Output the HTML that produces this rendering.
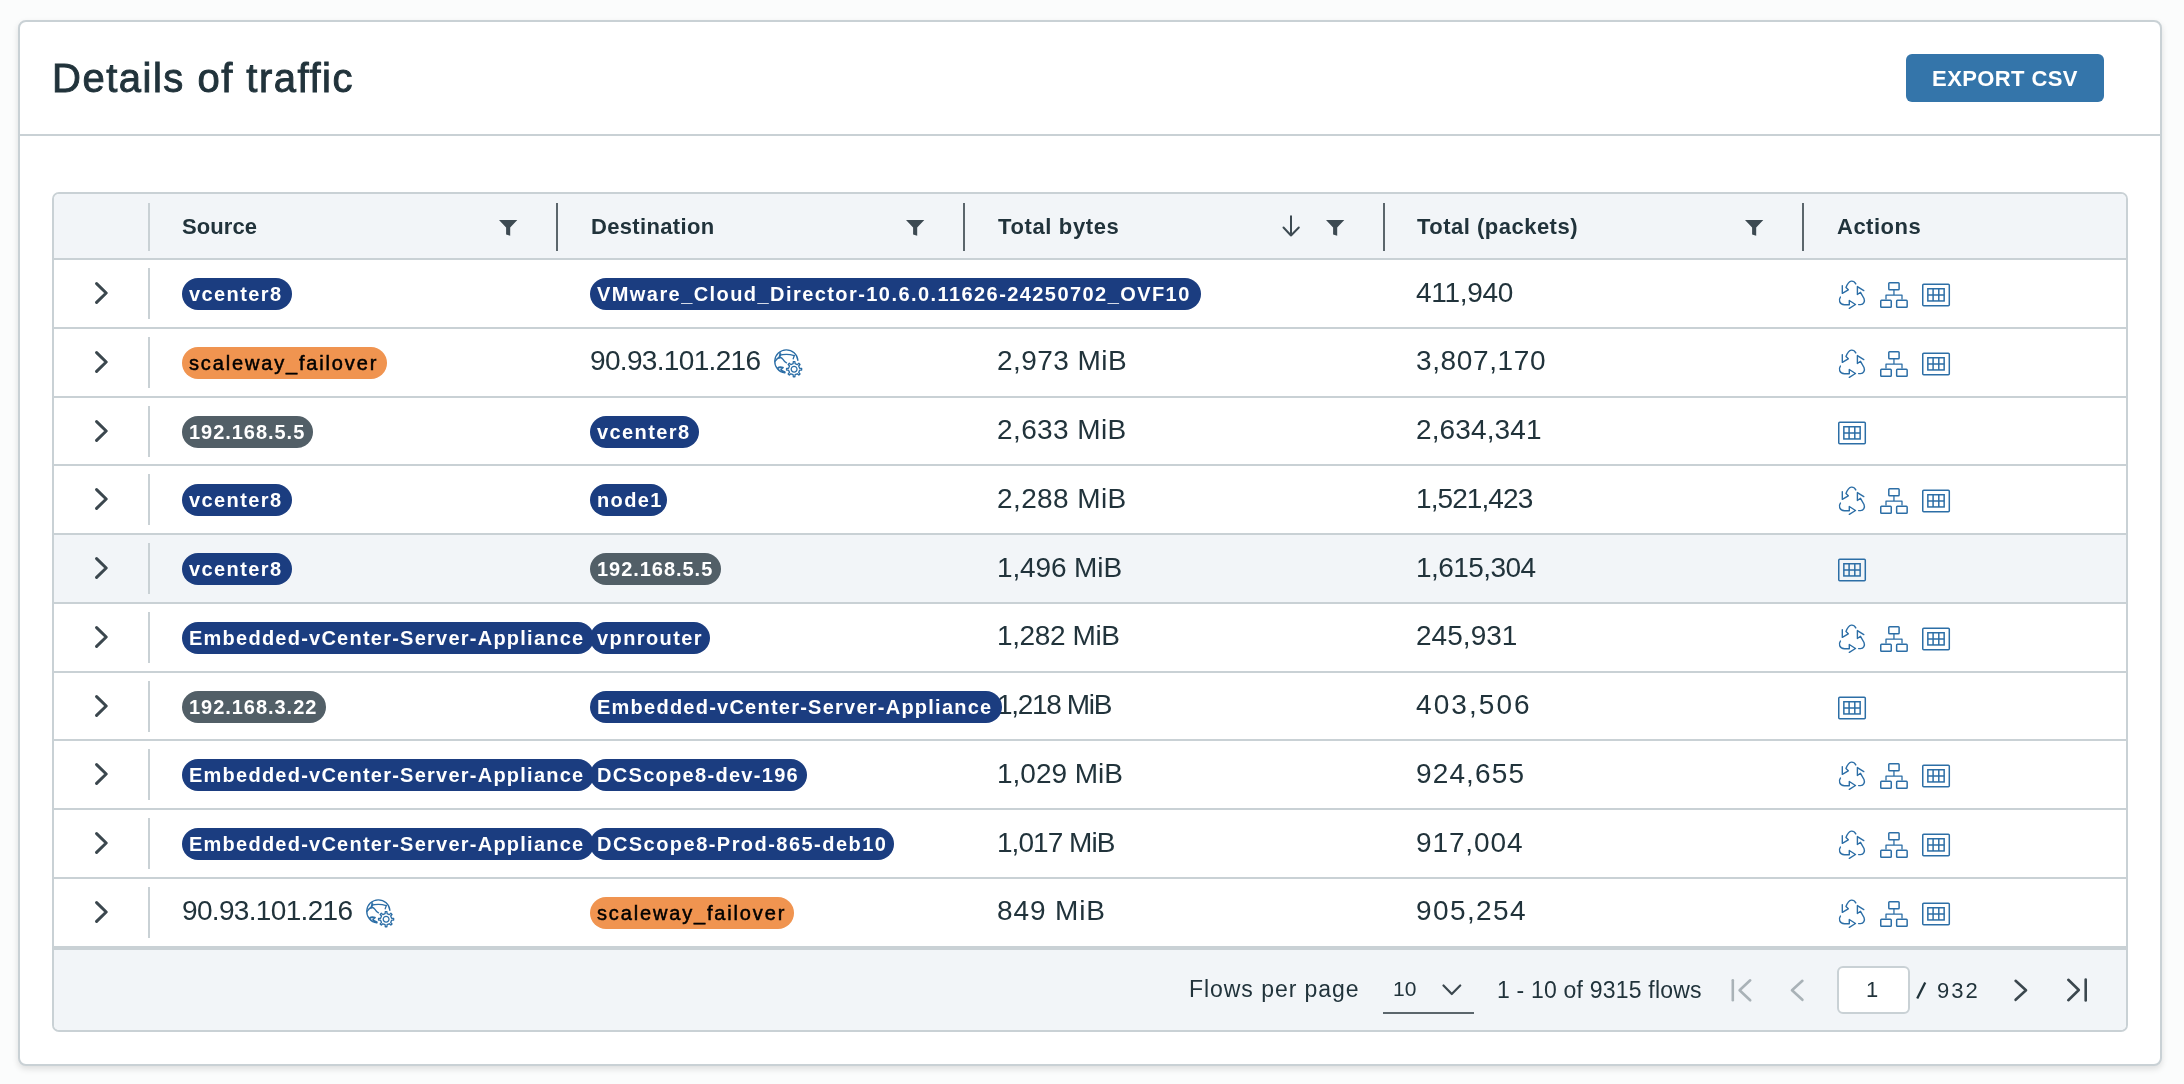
<!DOCTYPE html>
<html><head><meta charset="utf-8"><title>Details of traffic</title>
<style>
html,body{margin:0;padding:0}
body{width:2184px;height:1084px;background:#fbfcfc;position:relative;overflow:hidden;font-family:"Liberation Sans",sans-serif;color:#21333b}
.abs{position:absolute}
.card{position:absolute;left:18px;top:20px;width:2140px;height:1042px;border:2px solid #c9d1d5;border-radius:8px;background:#fff;box-shadow:0 3px 6px rgba(0,0,0,0.12)}
.hline{position:absolute;left:20px;top:134px;width:2140px;height:2px;background:#c9d1d5}
.title{-webkit-text-stroke:0.9px #21333b;will-change:transform;position:absolute;left:52px;top:58px;font-size:40px;line-height:40px;letter-spacing:1.5px;white-space:nowrap;color:#21333b}
.btn{will-change:transform;position:absolute;left:1906px;top:54px;width:198px;height:48px;border-radius:6px;background:#3475aa;color:#fff;font-weight:700;font-size:22px;line-height:50px;text-align:center;letter-spacing:0.4px}
.grid{will-change:transform;position:absolute;left:52px;top:192px;width:2072px;height:836px;border:2px solid #c9d1d5;border-radius:7px;background:#fff;overflow:hidden}
.hdr{position:absolute;left:0;top:0;width:2072px;height:64px;background:#f2f5f8;border-bottom:2px solid #c9d1d5}
.hl{position:absolute;top:21.5px;font-size:22px;line-height:22px;font-weight:700;white-space:nowrap;color:#21333b}
.sep{position:absolute;top:9px;width:2px;height:48px;background:#5b666c}
.row{position:absolute;left:0;width:2072px;height:66.75px;border-bottom:2px solid #c9d1d5;background:#fff}
.row.hov{background:#f2f5f8}
.rsep{position:absolute;left:94px;top:8px;width:2px;height:51px;background:#c9d1d5}
.chev{position:absolute;left:41px;top:22px}
.bd{position:absolute;top:18px;height:32px;border-radius:16px;font-size:20px;line-height:32px;padding-left:7px;box-sizing:border-box;white-space:nowrap;overflow:visible;z-index:1}
.dt{position:absolute;top:18.6px;font-size:28px;line-height:28px;white-space:nowrap;letter-spacing:0.2px;color:#21333b}
.ic{position:absolute;top:16px}
.gl{position:absolute;top:16px}
.flt{position:absolute;top:26px}
.ftr{position:absolute;left:0;top:753.5px;width:2072px;height:82.5px;background:#f2f5f8;border-top:2px solid #c9d1d5}
.ft{position:absolute;font-size:23px;line-height:23px;white-space:nowrap;color:#21333b}
</style></head><body>
<div class="card"></div>
<div class="hline"></div>
<div class="title">Details of traffic</div>
<div class="btn">EXPORT CSV</div>
<div class="grid">
<div class="hdr">
<div class="sep" style="left:94px;background:#c9d1d5"></div>
<div class="hl" style="left:128px;letter-spacing:0.1px">Source</div>

<svg class="flt" style="left:445px" width="19" height="16" viewBox="0 0 19 16"><polygon points="0,0 18.3,0 11.2,7.6 11.2,15.7 7.1,14.5 7.1,7.6" fill="#3d4a52"/></svg>
<div class="sep" style="left:502px"></div>
<div class="hl" style="left:537px;letter-spacing:0.33px">Destination</div>
<svg class="flt" style="left:852px" width="19" height="16" viewBox="0 0 19 16"><polygon points="0,0 18.3,0 11.2,7.6 11.2,15.7 7.1,14.5 7.1,7.6" fill="#3d4a52"/></svg>
<div class="sep" style="left:909px"></div>
<div class="hl" style="left:944px;letter-spacing:0.63px">Total bytes</div>
<svg class="abs" style="left:1228px;top:21px" width="19" height="22" viewBox="0 0 19 22"><g fill="none" stroke="#3d4a52" stroke-width="2" stroke-linecap="round" stroke-linejoin="round"><path d="M9,1.2 V20.5 M1.5,12.5 L9,20.5 L16.8,12.5"/></g></svg>
<svg class="flt" style="left:1272px" width="19" height="16" viewBox="0 0 19 16"><polygon points="0,0 18.3,0 11.2,7.6 11.2,15.7 7.1,14.5 7.1,7.6" fill="#3d4a52"/></svg>
<div class="sep" style="left:1329px"></div>
<div class="hl" style="left:1363px;letter-spacing:0.49px">Total (packets)</div>
<svg class="flt" style="left:1691px" width="19" height="16" viewBox="0 0 19 16"><polygon points="0,0 18.3,0 11.2,7.6 11.2,15.7 7.1,14.5 7.1,7.6" fill="#3d4a52"/></svg>
<div class="sep" style="left:1748px"></div>
<div class="hl" style="left:1783px;letter-spacing:0.5px">Actions</div>
</div>
<div class="row" style="top:66.00px">
<div class="rsep"></div>
<svg class="chev" width="13" height="22" viewBox="0 0 13 22"><polyline points="1.6,1.6 11.2,11 1.6,20.4" fill="none" stroke="#3b474e" stroke-width="3" stroke-linecap="round" stroke-linejoin="round"/></svg>
<div class="bd" style="left:128px;width:110px;background:#1b3d80;color:#fff;font-weight:700;letter-spacing:1.4px">vcenter8</div>
<div class="bd" style="left:536px;width:611px;background:#1b3d80;color:#fff;font-weight:700;letter-spacing:1.43px">VMware_Cloud_Director-10.6.0.11626-24250702_OVF10</div>
<div class="dt" style="left:1362px;letter-spacing:-0.3px">411,940</div>
<svg class="ic" style="left:1780px" width="36" height="36" viewBox="0 0 36 36"><g fill="none" stroke="#2c6ea6" stroke-width="1.4" stroke-linecap="round" stroke-linejoin="round">
<path d="M21.8,7.9 C20.6,5.6 18.6,5 17.4,5.1 C15.2,5.3 13.6,7 12,11.6 L14.3,13.8 L8.3,17.3 L8.3,9.6"/>
<path d="M29.8,14.6 L23.4,10.6 L23.4,18.5 L26.5,16.3 L30,22.5 C31.2,25.5 29.6,28.6 26.5,28.6 L24.6,28.6"/>
<path d="M6.4,21.1 C4.6,23.5 5,28.8 10.5,28.8 L15.3,28.8 L15.3,24.5 L21.5,28.5 L15.3,32.3"/>
</g></svg>
<svg class="ic" style="left:1822px" width="36" height="36" viewBox="0 0 36 36"><g fill="none" stroke="#2c6ea6" stroke-width="1.5" stroke-linejoin="round">
<rect x="12.8" y="6.8" width="10.3" height="6.9" rx="0.8"/>
<rect x="4.75" y="24.35" width="10.5" height="7" rx="0.8"/>
<rect x="20.65" y="24.35" width="10.5" height="7" rx="0.8"/>
<path d="M17.95,13.7 V19.1 M10,23.6 V19.1 H26 V23.6" stroke-width="1.3"/>
</g></svg>
<svg class="ic" style="left:1864px" width="36" height="36" viewBox="0 0 36 36"><g fill="none" stroke="#2c6ea6" stroke-width="1.5">
<rect x="4.75" y="8.25" width="26.55" height="21.6" rx="1"/>
<rect x="9.85" y="12.75" width="16.3" height="12.2"/>
<path d="M15.1,12.75 V24.95 M20.8,12.75 V24.95 M9.85,18.9 H26.15"/>
</g></svg>
</div>
<div class="row" style="top:134.75px">
<div class="rsep"></div>
<svg class="chev" width="13" height="22" viewBox="0 0 13 22"><polyline points="1.6,1.6 11.2,11 1.6,20.4" fill="none" stroke="#3b474e" stroke-width="3" stroke-linecap="round" stroke-linejoin="round"/></svg>
<div class="bd" style="left:128px;width:205px;background:#f09450;color:#000;font-weight:400;letter-spacing:1.84px;-webkit-text-stroke:0.5px #000">scaleway_failover</div>
<div class="dt" style="left:536px;letter-spacing:-0.67px">90.93.101.216</div><svg class="gl" style="left:716px" width="36" height="36" viewBox="0 0 36 36"><g fill="none" stroke="#2c6ea6" stroke-width="1.3" stroke-linecap="round" stroke-linejoin="round">
<path d="M27.9,15.4 A11.6,11.6 0 1 0 14.8,27.9"/>
<path d="M10,7.5 C9.5,9.5 10.5,10.5 12.5,9.6 C16,9 20,9.2 24.3,10.6"/>
<path d="M5,16.5 C6.5,14 8.5,12.5 10,12.5 C11.5,12.5 12.3,13.3 13,14.3 C14,16 15.2,17.2 16.5,17.8"/>
<path d="M10.5,9.2 C10,10.5 9.5,11.5 9.3,12.5" stroke-width="2"/>
<path d="M24.3,10.6 L23.2,13.8"/>
<path d="M8,23 C9,22 10.5,21.8 13,22.5 C11.5,23.5 10.5,24.5 11.5,25.5 C12.5,26.2 13.5,26.7 14.8,27.2" stroke-width="1.8"/>
</g>
<g transform="translate(24.1,24.2)" fill="none" stroke="#2c6ea6" stroke-width="1.3" stroke-linejoin="round">
<path d="M5.52,-0.96 L7.55,-0.83 L7.55,0.83 L5.52,0.96 L4.58,3.22 L5.93,4.75 L4.75,5.93 L3.22,4.58 L0.96,5.52 L0.83,7.55 L-0.83,7.55 L-0.96,5.52 L-3.22,4.58 L-4.75,5.93 L-5.93,4.75 L-4.58,3.22 L-5.52,0.96 L-7.55,0.83 L-7.55,-0.83 L-5.52,-0.96 L-4.58,-3.22 L-5.93,-4.75 L-4.75,-5.93 L-3.22,-4.58 L-0.96,-5.52 L-0.83,-7.55 L0.83,-7.55 L0.96,-5.52 L3.22,-4.58 L4.75,-5.93 L5.93,-4.75 L4.58,-3.22Z"/>
<circle r="2.9"/>
</g></svg>
<div class="dt" style="left:943px;letter-spacing:0.45px">2,973 MiB</div>
<div class="dt" style="left:1362px;letter-spacing:0.613px">3,807,170</div>
<svg class="ic" style="left:1780px" width="36" height="36" viewBox="0 0 36 36"><g fill="none" stroke="#2c6ea6" stroke-width="1.4" stroke-linecap="round" stroke-linejoin="round">
<path d="M21.8,7.9 C20.6,5.6 18.6,5 17.4,5.1 C15.2,5.3 13.6,7 12,11.6 L14.3,13.8 L8.3,17.3 L8.3,9.6"/>
<path d="M29.8,14.6 L23.4,10.6 L23.4,18.5 L26.5,16.3 L30,22.5 C31.2,25.5 29.6,28.6 26.5,28.6 L24.6,28.6"/>
<path d="M6.4,21.1 C4.6,23.5 5,28.8 10.5,28.8 L15.3,28.8 L15.3,24.5 L21.5,28.5 L15.3,32.3"/>
</g></svg>
<svg class="ic" style="left:1822px" width="36" height="36" viewBox="0 0 36 36"><g fill="none" stroke="#2c6ea6" stroke-width="1.5" stroke-linejoin="round">
<rect x="12.8" y="6.8" width="10.3" height="6.9" rx="0.8"/>
<rect x="4.75" y="24.35" width="10.5" height="7" rx="0.8"/>
<rect x="20.65" y="24.35" width="10.5" height="7" rx="0.8"/>
<path d="M17.95,13.7 V19.1 M10,23.6 V19.1 H26 V23.6" stroke-width="1.3"/>
</g></svg>
<svg class="ic" style="left:1864px" width="36" height="36" viewBox="0 0 36 36"><g fill="none" stroke="#2c6ea6" stroke-width="1.5">
<rect x="4.75" y="8.25" width="26.55" height="21.6" rx="1"/>
<rect x="9.85" y="12.75" width="16.3" height="12.2"/>
<path d="M15.1,12.75 V24.95 M20.8,12.75 V24.95 M9.85,18.9 H26.15"/>
</g></svg>
</div>
<div class="row" style="top:203.50px">
<div class="rsep"></div>
<svg class="chev" width="13" height="22" viewBox="0 0 13 22"><polyline points="1.6,1.6 11.2,11 1.6,20.4" fill="none" stroke="#3b474e" stroke-width="3" stroke-linecap="round" stroke-linejoin="round"/></svg>
<div class="bd" style="left:128px;width:131px;background:#525f67;color:#fff;font-weight:700;letter-spacing:0.96px">192.168.5.5</div>
<div class="bd" style="left:536px;width:109px;background:#1b3d80;color:#fff;font-weight:700;letter-spacing:1.4px">vcenter8</div>
<div class="dt" style="left:943px;letter-spacing:0.4px">2,633 MiB</div>
<div class="dt" style="left:1362px;letter-spacing:0.125px">2,634,341</div>
<svg class="ic" style="left:1780px" width="36" height="36" viewBox="0 0 36 36"><g fill="none" stroke="#2c6ea6" stroke-width="1.5">
<rect x="4.75" y="8.25" width="26.55" height="21.6" rx="1"/>
<rect x="9.85" y="12.75" width="16.3" height="12.2"/>
<path d="M15.1,12.75 V24.95 M20.8,12.75 V24.95 M9.85,18.9 H26.15"/>
</g></svg>
</div>
<div class="row" style="top:272.25px">
<div class="rsep"></div>
<svg class="chev" width="13" height="22" viewBox="0 0 13 22"><polyline points="1.6,1.6 11.2,11 1.6,20.4" fill="none" stroke="#3b474e" stroke-width="3" stroke-linecap="round" stroke-linejoin="round"/></svg>
<div class="bd" style="left:128px;width:110px;background:#1b3d80;color:#fff;font-weight:700;letter-spacing:1.4px">vcenter8</div>
<div class="bd" style="left:536px;width:77px;background:#1b3d80;color:#fff;font-weight:700;letter-spacing:1.4px">node1</div>
<div class="dt" style="left:943px;letter-spacing:0.4px">2,288 MiB</div>
<div class="dt" style="left:1362px;letter-spacing:-0.913px">1,521,423</div>
<svg class="ic" style="left:1780px" width="36" height="36" viewBox="0 0 36 36"><g fill="none" stroke="#2c6ea6" stroke-width="1.4" stroke-linecap="round" stroke-linejoin="round">
<path d="M21.8,7.9 C20.6,5.6 18.6,5 17.4,5.1 C15.2,5.3 13.6,7 12,11.6 L14.3,13.8 L8.3,17.3 L8.3,9.6"/>
<path d="M29.8,14.6 L23.4,10.6 L23.4,18.5 L26.5,16.3 L30,22.5 C31.2,25.5 29.6,28.6 26.5,28.6 L24.6,28.6"/>
<path d="M6.4,21.1 C4.6,23.5 5,28.8 10.5,28.8 L15.3,28.8 L15.3,24.5 L21.5,28.5 L15.3,32.3"/>
</g></svg>
<svg class="ic" style="left:1822px" width="36" height="36" viewBox="0 0 36 36"><g fill="none" stroke="#2c6ea6" stroke-width="1.5" stroke-linejoin="round">
<rect x="12.8" y="6.8" width="10.3" height="6.9" rx="0.8"/>
<rect x="4.75" y="24.35" width="10.5" height="7" rx="0.8"/>
<rect x="20.65" y="24.35" width="10.5" height="7" rx="0.8"/>
<path d="M17.95,13.7 V19.1 M10,23.6 V19.1 H26 V23.6" stroke-width="1.3"/>
</g></svg>
<svg class="ic" style="left:1864px" width="36" height="36" viewBox="0 0 36 36"><g fill="none" stroke="#2c6ea6" stroke-width="1.5">
<rect x="4.75" y="8.25" width="26.55" height="21.6" rx="1"/>
<rect x="9.85" y="12.75" width="16.3" height="12.2"/>
<path d="M15.1,12.75 V24.95 M20.8,12.75 V24.95 M9.85,18.9 H26.15"/>
</g></svg>
</div>
<div class="row hov" style="top:341.00px">
<div class="rsep"></div>
<svg class="chev" width="13" height="22" viewBox="0 0 13 22"><polyline points="1.6,1.6 11.2,11 1.6,20.4" fill="none" stroke="#3b474e" stroke-width="3" stroke-linecap="round" stroke-linejoin="round"/></svg>
<div class="bd" style="left:128px;width:110px;background:#1b3d80;color:#fff;font-weight:700;letter-spacing:1.4px">vcenter8</div>
<div class="bd" style="left:536px;width:131px;background:#525f67;color:#fff;font-weight:700;letter-spacing:0.96px">192.168.5.5</div>
<div class="dt" style="left:943px;letter-spacing:-0.125px">1,496 MiB</div>
<div class="dt" style="left:1362px;letter-spacing:-0.575px">1,615,304</div>
<svg class="ic" style="left:1780px" width="36" height="36" viewBox="0 0 36 36"><g fill="none" stroke="#2c6ea6" stroke-width="1.5">
<rect x="4.75" y="8.25" width="26.55" height="21.6" rx="1"/>
<rect x="9.85" y="12.75" width="16.3" height="12.2"/>
<path d="M15.1,12.75 V24.95 M20.8,12.75 V24.95 M9.85,18.9 H26.15"/>
</g></svg>
</div>
<div class="row" style="top:409.75px">
<div class="rsep"></div>
<svg class="chev" width="13" height="22" viewBox="0 0 13 22"><polyline points="1.6,1.6 11.2,11 1.6,20.4" fill="none" stroke="#3b474e" stroke-width="3" stroke-linecap="round" stroke-linejoin="round"/></svg>
<div class="bd" style="left:128px;width:412px;background:#1b3d80;color:#fff;font-weight:700;letter-spacing:1.24px">Embedded-vCenter-Server-Appliance</div>
<div class="bd" style="left:536px;width:120px;background:#1b3d80;color:#fff;font-weight:700;letter-spacing:1.4px">vpnrouter</div>
<div class="dt" style="left:943px;letter-spacing:-0.388px">1,282 MiB</div>
<div class="dt" style="left:1362px;letter-spacing:0.033px">245,931</div>
<svg class="ic" style="left:1780px" width="36" height="36" viewBox="0 0 36 36"><g fill="none" stroke="#2c6ea6" stroke-width="1.4" stroke-linecap="round" stroke-linejoin="round">
<path d="M21.8,7.9 C20.6,5.6 18.6,5 17.4,5.1 C15.2,5.3 13.6,7 12,11.6 L14.3,13.8 L8.3,17.3 L8.3,9.6"/>
<path d="M29.8,14.6 L23.4,10.6 L23.4,18.5 L26.5,16.3 L30,22.5 C31.2,25.5 29.6,28.6 26.5,28.6 L24.6,28.6"/>
<path d="M6.4,21.1 C4.6,23.5 5,28.8 10.5,28.8 L15.3,28.8 L15.3,24.5 L21.5,28.5 L15.3,32.3"/>
</g></svg>
<svg class="ic" style="left:1822px" width="36" height="36" viewBox="0 0 36 36"><g fill="none" stroke="#2c6ea6" stroke-width="1.5" stroke-linejoin="round">
<rect x="12.8" y="6.8" width="10.3" height="6.9" rx="0.8"/>
<rect x="4.75" y="24.35" width="10.5" height="7" rx="0.8"/>
<rect x="20.65" y="24.35" width="10.5" height="7" rx="0.8"/>
<path d="M17.95,13.7 V19.1 M10,23.6 V19.1 H26 V23.6" stroke-width="1.3"/>
</g></svg>
<svg class="ic" style="left:1864px" width="36" height="36" viewBox="0 0 36 36"><g fill="none" stroke="#2c6ea6" stroke-width="1.5">
<rect x="4.75" y="8.25" width="26.55" height="21.6" rx="1"/>
<rect x="9.85" y="12.75" width="16.3" height="12.2"/>
<path d="M15.1,12.75 V24.95 M20.8,12.75 V24.95 M9.85,18.9 H26.15"/>
</g></svg>
</div>
<div class="row" style="top:478.50px">
<div class="rsep"></div>
<svg class="chev" width="13" height="22" viewBox="0 0 13 22"><polyline points="1.6,1.6 11.2,11 1.6,20.4" fill="none" stroke="#3b474e" stroke-width="3" stroke-linecap="round" stroke-linejoin="round"/></svg>
<div class="bd" style="left:128px;width:144px;background:#525f67;color:#fff;font-weight:700;letter-spacing:0.96px">192.168.3.22</div>
<div class="bd" style="left:536px;width:412px;background:#1b3d80;color:#fff;font-weight:700;letter-spacing:1.24px">Embedded-vCenter-Server-Appliance</div>
<div class="dt" style="left:943px;letter-spacing:-1.338px">1,218 MiB</div>
<div class="dt" style="left:1362px;letter-spacing:2.067px">403,506</div>
<svg class="ic" style="left:1780px" width="36" height="36" viewBox="0 0 36 36"><g fill="none" stroke="#2c6ea6" stroke-width="1.5">
<rect x="4.75" y="8.25" width="26.55" height="21.6" rx="1"/>
<rect x="9.85" y="12.75" width="16.3" height="12.2"/>
<path d="M15.1,12.75 V24.95 M20.8,12.75 V24.95 M9.85,18.9 H26.15"/>
</g></svg>
</div>
<div class="row" style="top:547.25px">
<div class="rsep"></div>
<svg class="chev" width="13" height="22" viewBox="0 0 13 22"><polyline points="1.6,1.6 11.2,11 1.6,20.4" fill="none" stroke="#3b474e" stroke-width="3" stroke-linecap="round" stroke-linejoin="round"/></svg>
<div class="bd" style="left:128px;width:412px;background:#1b3d80;color:#fff;font-weight:700;letter-spacing:1.24px">Embedded-vCenter-Server-Appliance</div>
<div class="bd" style="left:536px;width:217px;background:#1b3d80;color:#fff;font-weight:700;letter-spacing:1.3px">DCScope8-dev-196</div>
<div class="dt" style="left:943px;letter-spacing:-0.012px">1,029 MiB</div>
<div class="dt" style="left:1362px;letter-spacing:1.133px">924,655</div>
<svg class="ic" style="left:1780px" width="36" height="36" viewBox="0 0 36 36"><g fill="none" stroke="#2c6ea6" stroke-width="1.4" stroke-linecap="round" stroke-linejoin="round">
<path d="M21.8,7.9 C20.6,5.6 18.6,5 17.4,5.1 C15.2,5.3 13.6,7 12,11.6 L14.3,13.8 L8.3,17.3 L8.3,9.6"/>
<path d="M29.8,14.6 L23.4,10.6 L23.4,18.5 L26.5,16.3 L30,22.5 C31.2,25.5 29.6,28.6 26.5,28.6 L24.6,28.6"/>
<path d="M6.4,21.1 C4.6,23.5 5,28.8 10.5,28.8 L15.3,28.8 L15.3,24.5 L21.5,28.5 L15.3,32.3"/>
</g></svg>
<svg class="ic" style="left:1822px" width="36" height="36" viewBox="0 0 36 36"><g fill="none" stroke="#2c6ea6" stroke-width="1.5" stroke-linejoin="round">
<rect x="12.8" y="6.8" width="10.3" height="6.9" rx="0.8"/>
<rect x="4.75" y="24.35" width="10.5" height="7" rx="0.8"/>
<rect x="20.65" y="24.35" width="10.5" height="7" rx="0.8"/>
<path d="M17.95,13.7 V19.1 M10,23.6 V19.1 H26 V23.6" stroke-width="1.3"/>
</g></svg>
<svg class="ic" style="left:1864px" width="36" height="36" viewBox="0 0 36 36"><g fill="none" stroke="#2c6ea6" stroke-width="1.5">
<rect x="4.75" y="8.25" width="26.55" height="21.6" rx="1"/>
<rect x="9.85" y="12.75" width="16.3" height="12.2"/>
<path d="M15.1,12.75 V24.95 M20.8,12.75 V24.95 M9.85,18.9 H26.15"/>
</g></svg>
</div>
<div class="row" style="top:616.00px">
<div class="rsep"></div>
<svg class="chev" width="13" height="22" viewBox="0 0 13 22"><polyline points="1.6,1.6 11.2,11 1.6,20.4" fill="none" stroke="#3b474e" stroke-width="3" stroke-linecap="round" stroke-linejoin="round"/></svg>
<div class="bd" style="left:128px;width:412px;background:#1b3d80;color:#fff;font-weight:700;letter-spacing:1.24px">Embedded-vCenter-Server-Appliance</div>
<div class="bd" style="left:536px;width:304px;background:#1b3d80;color:#fff;font-weight:700;letter-spacing:1.46px">DCScope8-Prod-865-deb10</div>
<div class="dt" style="left:943px;letter-spacing:-0.963px">1,017 MiB</div>
<div class="dt" style="left:1362px;letter-spacing:0.883px">917,004</div>
<svg class="ic" style="left:1780px" width="36" height="36" viewBox="0 0 36 36"><g fill="none" stroke="#2c6ea6" stroke-width="1.4" stroke-linecap="round" stroke-linejoin="round">
<path d="M21.8,7.9 C20.6,5.6 18.6,5 17.4,5.1 C15.2,5.3 13.6,7 12,11.6 L14.3,13.8 L8.3,17.3 L8.3,9.6"/>
<path d="M29.8,14.6 L23.4,10.6 L23.4,18.5 L26.5,16.3 L30,22.5 C31.2,25.5 29.6,28.6 26.5,28.6 L24.6,28.6"/>
<path d="M6.4,21.1 C4.6,23.5 5,28.8 10.5,28.8 L15.3,28.8 L15.3,24.5 L21.5,28.5 L15.3,32.3"/>
</g></svg>
<svg class="ic" style="left:1822px" width="36" height="36" viewBox="0 0 36 36"><g fill="none" stroke="#2c6ea6" stroke-width="1.5" stroke-linejoin="round">
<rect x="12.8" y="6.8" width="10.3" height="6.9" rx="0.8"/>
<rect x="4.75" y="24.35" width="10.5" height="7" rx="0.8"/>
<rect x="20.65" y="24.35" width="10.5" height="7" rx="0.8"/>
<path d="M17.95,13.7 V19.1 M10,23.6 V19.1 H26 V23.6" stroke-width="1.3"/>
</g></svg>
<svg class="ic" style="left:1864px" width="36" height="36" viewBox="0 0 36 36"><g fill="none" stroke="#2c6ea6" stroke-width="1.5">
<rect x="4.75" y="8.25" width="26.55" height="21.6" rx="1"/>
<rect x="9.85" y="12.75" width="16.3" height="12.2"/>
<path d="M15.1,12.75 V24.95 M20.8,12.75 V24.95 M9.85,18.9 H26.15"/>
</g></svg>
</div>
<div class="row" style="top:684.75px">
<div class="rsep"></div>
<svg class="chev" width="13" height="22" viewBox="0 0 13 22"><polyline points="1.6,1.6 11.2,11 1.6,20.4" fill="none" stroke="#3b474e" stroke-width="3" stroke-linecap="round" stroke-linejoin="round"/></svg>
<div class="dt" style="left:128px;letter-spacing:-0.67px">90.93.101.216</div><svg class="gl" style="left:308px" width="36" height="36" viewBox="0 0 36 36"><g fill="none" stroke="#2c6ea6" stroke-width="1.3" stroke-linecap="round" stroke-linejoin="round">
<path d="M27.9,15.4 A11.6,11.6 0 1 0 14.8,27.9"/>
<path d="M10,7.5 C9.5,9.5 10.5,10.5 12.5,9.6 C16,9 20,9.2 24.3,10.6"/>
<path d="M5,16.5 C6.5,14 8.5,12.5 10,12.5 C11.5,12.5 12.3,13.3 13,14.3 C14,16 15.2,17.2 16.5,17.8"/>
<path d="M10.5,9.2 C10,10.5 9.5,11.5 9.3,12.5" stroke-width="2"/>
<path d="M24.3,10.6 L23.2,13.8"/>
<path d="M8,23 C9,22 10.5,21.8 13,22.5 C11.5,23.5 10.5,24.5 11.5,25.5 C12.5,26.2 13.5,26.7 14.8,27.2" stroke-width="1.8"/>
</g>
<g transform="translate(24.1,24.2)" fill="none" stroke="#2c6ea6" stroke-width="1.3" stroke-linejoin="round">
<path d="M5.52,-0.96 L7.55,-0.83 L7.55,0.83 L5.52,0.96 L4.58,3.22 L5.93,4.75 L4.75,5.93 L3.22,4.58 L0.96,5.52 L0.83,7.55 L-0.83,7.55 L-0.96,5.52 L-3.22,4.58 L-4.75,5.93 L-5.93,4.75 L-4.58,3.22 L-5.52,0.96 L-7.55,0.83 L-7.55,-0.83 L-5.52,-0.96 L-4.58,-3.22 L-5.93,-4.75 L-4.75,-5.93 L-3.22,-4.58 L-0.96,-5.52 L-0.83,-7.55 L0.83,-7.55 L0.96,-5.52 L3.22,-4.58 L4.75,-5.93 L5.93,-4.75 L4.58,-3.22Z"/>
<circle r="2.9"/>
</g></svg>
<div class="bd" style="left:536px;width:204px;background:#f09450;color:#000;font-weight:400;letter-spacing:1.84px;-webkit-text-stroke:0.5px #000">scaleway_failover</div>
<div class="dt" style="left:943px;letter-spacing:0.867px">849 MiB</div>
<div class="dt" style="left:1362px;letter-spacing:1.4px">905,254</div>
<svg class="ic" style="left:1780px" width="36" height="36" viewBox="0 0 36 36"><g fill="none" stroke="#2c6ea6" stroke-width="1.4" stroke-linecap="round" stroke-linejoin="round">
<path d="M21.8,7.9 C20.6,5.6 18.6,5 17.4,5.1 C15.2,5.3 13.6,7 12,11.6 L14.3,13.8 L8.3,17.3 L8.3,9.6"/>
<path d="M29.8,14.6 L23.4,10.6 L23.4,18.5 L26.5,16.3 L30,22.5 C31.2,25.5 29.6,28.6 26.5,28.6 L24.6,28.6"/>
<path d="M6.4,21.1 C4.6,23.5 5,28.8 10.5,28.8 L15.3,28.8 L15.3,24.5 L21.5,28.5 L15.3,32.3"/>
</g></svg>
<svg class="ic" style="left:1822px" width="36" height="36" viewBox="0 0 36 36"><g fill="none" stroke="#2c6ea6" stroke-width="1.5" stroke-linejoin="round">
<rect x="12.8" y="6.8" width="10.3" height="6.9" rx="0.8"/>
<rect x="4.75" y="24.35" width="10.5" height="7" rx="0.8"/>
<rect x="20.65" y="24.35" width="10.5" height="7" rx="0.8"/>
<path d="M17.95,13.7 V19.1 M10,23.6 V19.1 H26 V23.6" stroke-width="1.3"/>
</g></svg>
<svg class="ic" style="left:1864px" width="36" height="36" viewBox="0 0 36 36"><g fill="none" stroke="#2c6ea6" stroke-width="1.5">
<rect x="4.75" y="8.25" width="26.55" height="21.6" rx="1"/>
<rect x="9.85" y="12.75" width="16.3" height="12.2"/>
<path d="M15.1,12.75 V24.95 M20.8,12.75 V24.95 M9.85,18.9 H26.15"/>
</g></svg>
</div>
<div class="ftr">
<div class="ft" style="left:1135px;top:28.03px;letter-spacing:0.95px">Flows per page</div>
<div class="ft" style="left:1339px;top:28.72px;font-size:21px;line-height:21px;letter-spacing:0px">10</div>
<svg class="abs" style="left:1388px;top:34.50px" width="20" height="12" viewBox="0 0 20 12"><polyline points="1.5,1.5 9.8,10 18.2,1.5" fill="none" stroke="#3b474e" stroke-width="2.2" stroke-linecap="round" stroke-linejoin="round"/></svg>
<div class="abs" style="left:1329px;top:62.50px;width:91px;height:2px;background:#5b666c"></div>
<div class="ft" style="left:1443px;top:29.33px;letter-spacing:0.2px">1 - 10 of 9315 flows</div>
<svg class="abs" style="left:1676px;top:28.50px" width="24" height="25" viewBox="0 0 24 25"><g fill="none" stroke="#a9b2b7" stroke-width="2.6" stroke-linecap="round" stroke-linejoin="round"><path d="M2.8,2.3 V22.3"/><polyline points="20.2,2.3 9.6,12.3 20.2,22.3"/></g></svg>
<svg class="abs" style="left:1735px;top:28.50px" width="16" height="25" viewBox="0 0 16 25"><polyline points="13.4,2.8 3,12.3 13.4,21.8" fill="none" stroke="#a9b2b7" stroke-width="2.6" stroke-linecap="round" stroke-linejoin="round"/></svg>
<div class="abs" style="left:1783px;top:16.50px;width:69px;height:44px;border:2px solid #c9d1d5;border-radius:6px;background:#fff"></div>
<div class="ft" style="left:1812px;top:29.18px;font-size:22px;line-height:22px">1</div>
<svg class="abs" style="left:1860px;top:29.50px" width="14" height="23" viewBox="0 0 14 23"><line x1="3.2" y1="19.6" x2="11.2" y2="3.4" stroke="#21333b" stroke-width="2.3" stroke-linecap="butt"/></svg>
<div class="ft" style="left:1883px;top:30.28px;font-size:22px;line-height:22px;letter-spacing:2px">932</div>
<svg class="abs" style="left:1959px;top:28.50px" width="16" height="25" viewBox="0 0 16 25"><polyline points="2.6,2.8 13,12.3 2.6,21.8" fill="none" stroke="#3b474e" stroke-width="2.6" stroke-linecap="round" stroke-linejoin="round"/></svg>
<svg class="abs" style="left:2011px;top:27.50px" width="25" height="26" viewBox="0 0 25 26"><g fill="none" stroke="#3b474e" stroke-width="2.6" stroke-linecap="round" stroke-linejoin="round"><path d="M20.7,2.5 V23.5"/><polyline points="3.3,2.8 13.8,13 3.3,23.2"/></g></svg>
</div>
</div>
</body></html>
